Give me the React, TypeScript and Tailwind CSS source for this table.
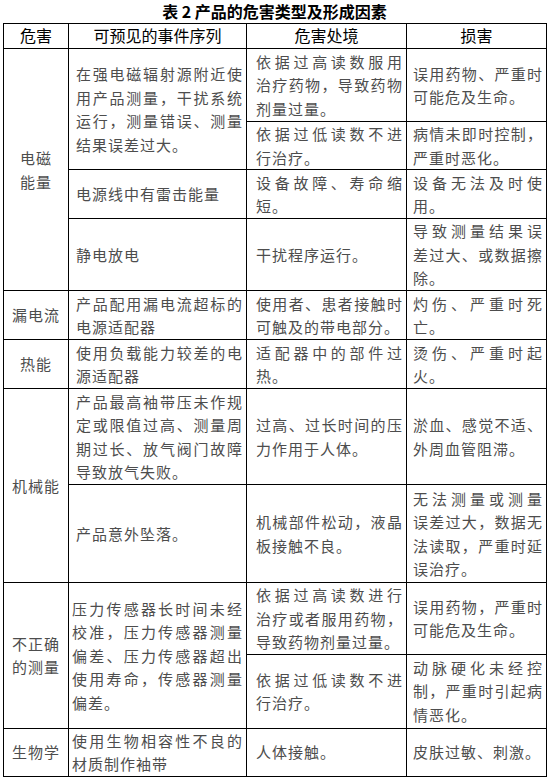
import React from 'react';

// one block per printed line, all but the last stretched to the cell width
const Lines = ({ lines }: { lines: string[] }) => (
  <>
    {lines.map((line, i) => (
      <div
        key={i}
        className={i < lines.length - 1 ? 'text-justify [text-align-last:justify]' : 'text-left'}
      >
        {line}
      </div>
    ))}
  </>
);

const td = 'border border-black align-middle p-0';
const c1 = `${td} text-center`;
const c2 = `${td} pl-[7px] pr-[3px]`;
const c2n = `${td} pl-[3px] pr-[3px]`;
const c3 = `${td} pl-[9px] pr-[3px]`;
const c4 = `${td} pl-[6px] pr-[3px]`;
const th = 'border border-black align-middle p-0 text-center font-normal text-black text-[16px] tracking-normal';

const App = () => (
  <div
    lang="zh-CN"
    className="w-[548px] h-[778px] bg-white pl-[3px]"
    style={{ fontFamily: '"Noto Sans CJK SC", "Noto Sans", sans-serif' }}
  >
    {/* Title */}
    <div className="w-[543px] h-[23px] text-center font-bold text-[16px] leading-[22px] text-black">
      表 2 产品的危害类型及形成因素
    </div>
    {/* Table */}
    <table className="table-fixed border-collapse w-[543px] text-[15px] leading-[23.5px] tracking-[1px] text-[#4d4d4d]">
      <colgroup>
        <col className="w-[65px]" />
        <col className="w-[178px]" />
        <col className="w-[160px]" />
        <col className="w-[140px]" />
      </colgroup>
      <tbody>
        <tr className="h-[25px]">
          <td className={th}>危害</td>
          <td className={th}>可预见的事件序列</td>
          <td className={th}>危害处境</td>
          <td className={th}>损害</td>
        </tr>

        {/* 电磁能量 */}
        <tr className="h-[73px]">
          <td className={c1} rowSpan={4}>
            电磁
            <br />
            能量
          </td>
          <td className={c2} rowSpan={2}>
            <Lines lines={['在强电磁辐射源附近使', '用产品测量，干扰系统', '运行，测量错误、测量', '结果误差过大。']} />
          </td>
          <td className={c3}>
            <Lines lines={['依据过高读数服用', '治疗药物，导致药物', '剂量过量。']} />
          </td>
          <td className={c4}>
            <Lines lines={['误用药物、严重时', '可能危及生命。']} />
          </td>
        </tr>
        <tr className="h-[48px]">
          <td className={c3}>
            <Lines lines={['依据过低读数不进', '行治疗。']} />
          </td>
          <td className={c4}>
            <Lines lines={['病情未即时控制，', '严重时恶化。']} />
          </td>
        </tr>
        <tr className="h-[49px]">
          <td className={c2}>
            <Lines lines={['电源线中有雷击能量']} />
          </td>
          <td className={c3}>
            <Lines lines={['设备故障、寿命缩', '短。']} />
          </td>
          <td className={c4}>
            <Lines lines={['设备无法及时使', '用。']} />
          </td>
        </tr>
        <tr className="h-[72px]">
          <td className={c2}>
            <Lines lines={['静电放电']} />
          </td>
          <td className={c3}>
            <Lines lines={['干扰程序运行。']} />
          </td>
          <td className={c4}>
            <Lines lines={['导致测量结果误', '差过大、或数据擦', '除。']} />
          </td>
        </tr>

        {/* 漏电流 */}
        <tr className="h-[49px]">
          <td className={c1}>漏电流</td>
          <td className={c2}>
            <Lines lines={['产品配用漏电流超标的', '电源适配器']} />
          </td>
          <td className={c3}>
            <Lines lines={['使用者、患者接触时', '可触及的带电部分。']} />
          </td>
          <td className={c4}>
            <Lines lines={['灼伤、严重时死', '亡。']} />
          </td>
        </tr>

        {/* 热能 */}
        <tr className="h-[49px]">
          <td className={c1}>热能</td>
          <td className={c2}>
            <Lines lines={['使用负载能力较差的电', '源适配器']} />
          </td>
          <td className={c3}>
            <Lines lines={['适配器中的部件过', '热。']} />
          </td>
          <td className={c4}>
            <Lines lines={['烫伤、严重时起', '火。']} />
          </td>
        </tr>

        {/* 机械能 */}
        <tr className="h-[96px]">
          <td className={c1} rowSpan={2}>
            机械能
          </td>
          <td className={c2}>
            <Lines lines={['产品最高袖带压未作规', '定或限值过高、测量周', '期过长、放气阀门故障', '导致放气失败。']} />
          </td>
          <td className={c3}>
            <Lines lines={['过高、过长时间的压', '力作用于人体。']} />
          </td>
          <td className={c4}>
            <Lines lines={['淤血、感觉不适、', '外周血管阻滞。']} />
          </td>
        </tr>
        <tr className="h-[98px]">
          <td className={c2}>
            <Lines lines={['产品意外坠落。']} />
          </td>
          <td className={c3}>
            <Lines lines={['机械部件松动，液晶', '板接触不良。']} />
          </td>
          <td className={c4}>
            <Lines lines={['无法测量或测量', '误差过大，数据无', '法读取，严重时延', '误治疗。']} />
          </td>
        </tr>

        {/* 不正确的测量 */}
        <tr className="h-[70px]">
          <td className={c1} rowSpan={2}>
            不正确
            <br />
            的测量
          </td>
          <td className={c2n} rowSpan={2}>
            <Lines
              lines={['压力传感器长时间未经', '校准，压力传感器测量', '偏差、压力传感器超出', '使用寿命，传感器测量', '偏差。']}
            />
          </td>
          <td className={c3}>
            <Lines lines={['依据过高读数进行', '治疗或者服用药物，', '导致药物剂量过量。']} />
          </td>
          <td className={c4}>
            <Lines lines={['误用药物，严重时', '可能危及生命。']} />
          </td>
        </tr>
        <tr className="h-[74px]">
          <td className={c3}>
            <Lines lines={['依据过低读数不进', '行治疗。']} />
          </td>
          <td className={c4}>
            <Lines lines={['动脉硬化未经控', '制，严重时引起病', '情恶化。']} />
          </td>
        </tr>

        {/* 生物学 */}
        <tr className="h-[47px]">
          <td className={c1}>生物学</td>
          <td className={c2n}>
            <Lines lines={['使用生物相容性不良的', '材质制作袖带']} />
          </td>
          <td className={c3}>
            <Lines lines={['人体接触。']} />
          </td>
          <td className={c4}>
            <Lines lines={['皮肤过敏、刺激。']} />
          </td>
        </tr>
      </tbody>
    </table>
  </div>
);

export default App;
